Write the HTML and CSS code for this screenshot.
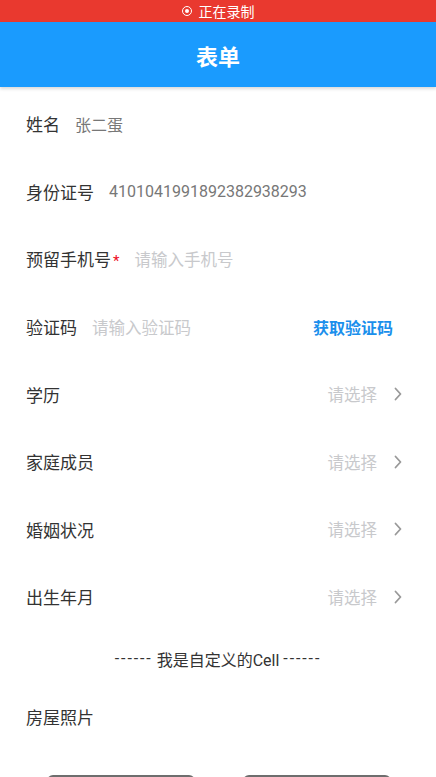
FILE: index.html
```html
<!DOCTYPE html>
<html lang="zh-CN">
<head>
    <meta charset="UTF-8">
    <meta name="viewport" content="width=device-width, initial-scale=1.0">
    <title>表单</title>
    <link rel="stylesheet" href="styles.css">
</head>
<body>

<div class="status-bar">
    <span class="rec-dot"></span>
    <span>正在录制</span>
</div>

<div class="nav-bar">表单</div>

<div class="form">
    <div class="cell">
        <span class="label">姓名</span>
        <span class="value">张二蛋</span>
    </div>
    <div class="cell">
        <span class="label">身份证号</span>
        <span class="value">4101041991892382938293</span>
    </div>
    <div class="cell">
        <span class="label">预留手机号<i class="required">*</i></span>
        <span class="placeholder">请输入手机号</span>
    </div>
    <div class="cell">
        <span class="label">验证码</span>
        <span class="placeholder grow">请输入验证码</span>
        <span class="code-btn">获取验证码</span>
    </div>
    <div class="cell">
        <span class="label grow">学历</span>
        <span class="placeholder">请选择</span>
        <svg class="arrow" width="8" height="14" viewBox="0 0 8 14"><path d="M1.5 1.5 L6.5 7 L1.5 12.5" fill="none" stroke="#999" stroke-width="1.8" stroke-linecap="round" stroke-linejoin="round"/></svg>
    </div>
    <div class="cell">
        <span class="label grow">家庭成员</span>
        <span class="placeholder">请选择</span>
        <svg class="arrow" width="8" height="14" viewBox="0 0 8 14"><path d="M1.5 1.5 L6.5 7 L1.5 12.5" fill="none" stroke="#999" stroke-width="1.8" stroke-linecap="round" stroke-linejoin="round"/></svg>
    </div>
    <div class="cell">
        <span class="label grow">婚姻状况</span>
        <span class="placeholder">请选择</span>
        <svg class="arrow" width="8" height="14" viewBox="0 0 8 14"><path d="M1.5 1.5 L6.5 7 L1.5 12.5" fill="none" stroke="#999" stroke-width="1.8" stroke-linecap="round" stroke-linejoin="round"/></svg>
    </div>
    <div class="cell">
        <span class="label grow">出生年月</span>
        <span class="placeholder">请选择</span>
        <svg class="arrow" width="8" height="14" viewBox="0 0 8 14"><path d="M1.5 1.5 L6.5 7 L1.5 12.5" fill="none" stroke="#999" stroke-width="1.8" stroke-linecap="round" stroke-linejoin="round"/></svg>
    </div>

    <div class="custom-cell"><span class="dashes">------</span>&nbsp;我是自定义的Cell&nbsp;<span class="dashes">------</span></div>

    <div class="cell photo-cell">
        <span class="label">房屋照片</span>
    </div>

    <div class="uploads">
        <div class="upload-box"></div>
        <div class="upload-box"></div>
    </div>
</div>

</body>
</html>
```

FILE: styles.css
```css
body {
    margin: 0;
    font-family: Roboto, "Noto Sans CJK SC", sans-serif;
    background-color: #fff;
    color: #333;
    overflow: hidden;
}

.status-bar {
    height: 22px;
    background-color: #e9392f;
    color: #fff;
    font-size: 14px;
    display: flex;
    align-items: center;
    justify-content: center;
    gap: 7px;
}

.rec-dot {
    width: 8px;
    height: 8px;
    border: 1.5px solid #fff;
    border-radius: 50%;
    position: relative;
}

.rec-dot::after {
    content: "";
    position: absolute;
    left: 2px;
    top: 2px;
    width: 4px;
    height: 4px;
    border-radius: 50%;
    background: #fff;
}

.nav-bar {
    height: 65px;
    background-color: #1a9bfe;
    color: #fff;
    font-size: 22px;
    font-weight: bold;
    display: flex;
    align-items: center;
    justify-content: center;
    box-shadow: 0 2px 3px rgba(0, 0, 0, 0.15);
}

.form {
    padding-top: 3px;
}

.cell {
    height: 67.6px;
    display: flex;
    align-items: center;
    padding: 0 34px 0 26px;
    font-size: 16px;
}

.label {
    font-size: 17px;
    color: #333;
    margin-right: 15px;
}

.grow {
    flex: 1;
}

.required {
    font-style: normal;
    color: #ee0a24;
    font-size: 15px;
    margin-left: 2px;
}

.value {
    color: #777;
}

.placeholder {
    color: #c8c9cc;
    font-size: 16.5px;
}

.code-btn {
    color: #1a8fec;
    font-weight: bold;
    font-size: 16px;
    margin-right: 9px;
}

.arrow {
    margin-left: 17px;
}

.custom-cell {
    height: 56px;
    display: flex;
    align-items: center;
    justify-content: center;
    font-size: 16px;
    color: #333;
}

.dashes {
    letter-spacing: 1.9px;
}

.photo-cell {
    height: 60px;
}

.uploads {
    display: flex;
    gap: 48px;
    padding: 28px 0 0 47px;
}

.upload-box {
    width: 144px;
    height: 144px;
    border: 2px solid #6e6e6e;
    border-radius: 6px;
}
```
